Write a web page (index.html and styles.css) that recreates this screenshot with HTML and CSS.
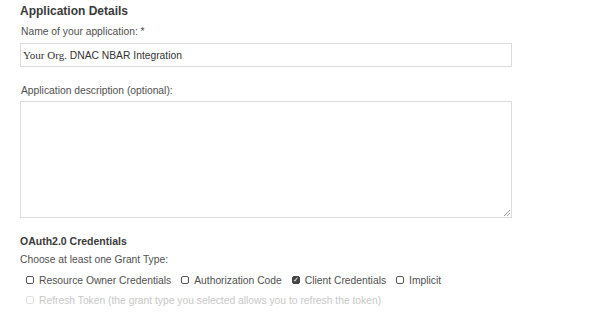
FILE: index.html
```html
<!DOCTYPE html>
<html lang="en">
<head>
    <meta charset="UTF-8">
    <title>Application Details</title>
    <link rel="stylesheet" href="styles.css">
</head>
<body>
    <div class="form">
        <h3 class="section-title">Application Details</h3>

        <!-- Nombre -->
        <label class="field-label" for="appName">Name of your application: *</label>
        <div class="text-input" id="appName"><span class="serif">Your Org.</span> DNAC NBAR Integration</div>

        <!-- Descripcion -->
        <label class="field-label desc-label" for="appDesc">Application description (optional):</label>
        <div class="text-area" id="appDesc"><span class="grip"></span></div>

        <h4 class="section-title small">OAuth2.0 Credentials</h4>
        <p class="hint">Choose at least one Grant Type:</p>

        <div class="grant-row">
            <label class="check"><span class="box"></span>Resource Owner Credentials</label>
            <label class="check"><span class="box"></span>Authorization Code</label>
            <label class="check"><span class="box checked">&#10003;</span>Client Credentials</label>
            <label class="check"><span class="box"></span>Implicit</label>
        </div>
        <div class="grant-row disabled">
            <label class="check"><span class="box"></span>Refresh Token (the grant type you selected allows you to refresh the token)</label>
        </div>
    </div>
</body>
</html>
```

FILE: styles.css
```css
body {
    font-family: "Liberation Sans", Arial, sans-serif;
    margin: 0;
    padding: 0;
    background-color: #fff;
    color: #555;
}

.form {
    width: 492px;
    padding: 3px 0 0 20px;
}

.section-title {
    margin: 0;
    font-size: 12px;
    line-height: 17px;
    font-weight: bold;
    color: #3a3a3a;
}

.section-title.small {
    font-size: 10.5px;
    line-height: 14px;
    margin-top: 16px;
}

.field-label {
    display: block;
    font-size: 10.3px;
    line-height: 14px;
    margin: 5px 0 4px 1px;
    color: #505050;
}

.desc-label {
    margin-top: 17px;
    margin-bottom: 3px;
}

.text-input {
    height: 22px;
    border: 1px solid #dcdcdc;
    font-size: 10.3px;
    line-height: 22px;
    padding-left: 2px;
    color: #333;
}

.serif {
    font-family: "Liberation Serif", "Times New Roman", serif;
    font-size: 11px;
}

.text-area {
    position: relative;
    height: 115px;
    border: 1px solid #dcdcdc;
}

.grip {
    position: absolute;
    right: 1px;
    bottom: 1px;
    width: 6px;
    height: 6px;
    background: linear-gradient(135deg, transparent 45%, #999 45%, #999 55%, transparent 55%, transparent 70%, #999 70%, #999 80%, transparent 80%);
}

.hint {
    font-size: 10.3px;
    line-height: 14px;
    margin: 5px 0 3px 0;
    color: #505050;
}

.grant-row {
    display: flex;
    gap: 10px;
    padding-left: 6px;
    height: 20px;
    align-items: center;
}

.check {
    display: flex;
    align-items: center;
    gap: 5px;
    font-size: 10.3px;
    color: #505050;
}

.box {
    width: 6px;
    height: 6px;
    border: 1px solid #555;
    border-radius: 2px;
    font-size: 7px;
    line-height: 6px;
    text-align: center;
    color: #fff;
}

.box.checked {
    background-color: #444;
    border-color: #444;
}

.disabled .check {
    color: #c8c8c8;
}

.disabled .box {
    border-color: #e2e2e2;
}
```
